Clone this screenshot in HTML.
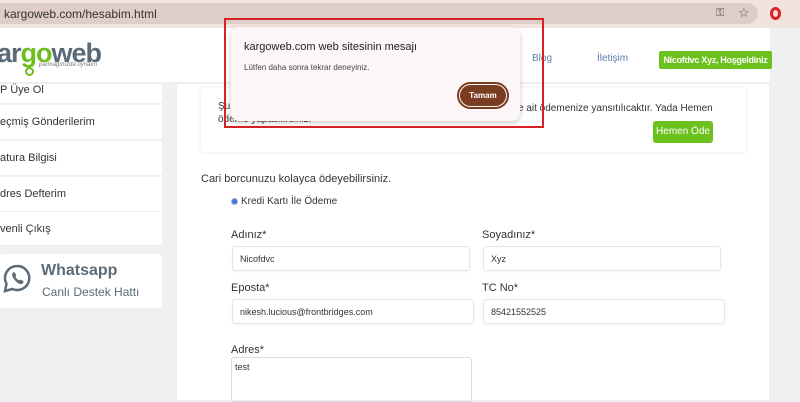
<!DOCTYPE html>
<html><head><meta charset="utf-8"><style>
*{margin:0;padding:0;box-sizing:border-box}
body{width:800px;height:400px;overflow:hidden;position:relative;font-family:"Liberation Sans",sans-serif;background:#f0f0f2;color:#333}
.abs{position:absolute;white-space:nowrap}
.top{left:0;top:0;width:800px;height:28px;background:#f1e3de}
.url{left:-10px;top:3px;width:768px;height:21px;border-radius:11px;background:#dfcdc8}
.hdr{left:0;top:28px;width:770px;height:55px;background:#fff;border-bottom:1px solid #eee}
.side{left:0;width:162px;background:#fff;font-size:11px;color:#333;padding-left:0;border-bottom:1px solid #eee;display:flex;align-items:center}
.main{left:177px;top:84px;width:592px;height:316px;background:#fff}
.lbl{font-size:11px;color:#333}
.inp{border:1px solid #e6e6e6;border-radius:3px;background:#fff;font-size:9px;color:#333;padding-left:7px;display:flex;align-items:center;box-shadow:0 1px 2px rgba(0,0,0,.05)}
</style></head><body>
<div class="abs top"></div>
<div class="abs url"></div>
<div class="abs" style="left:4px;top:7px;font-size:12px;color:#333">kargoweb.com/hesabim.html</div>
<div class="abs" style="left:716px;top:7px;font-size:11px;color:#555">⚿</div>
<div class="abs" style="left:738px;top:5px;font-size:13px;color:#555">☆</div>
<div class="abs" style="left:770px;top:7px;width:11px;height:13px;border:3px solid #d22;border-radius:50%"></div>
<div class="abs hdr"></div>
<div class="abs" style="left:-3px;top:38px;font-size:27px;font-weight:bold;color:#5a6a78;letter-spacing:-1px">ar<span style="color:#6cbf1e">go</span>web</div>
<div class="abs" style="left:25px;top:67px;width:9px;height:9px;border:2px solid #6cbf1e;border-radius:50%"></div>
<div class="abs" style="left:38px;top:62px;font-size:6px;color:#777;font-style:italic;background:#fff;padding:0 1px">parmağınızda oynatın</div>
<div class="abs" style="left:532px;top:53px;font-size:10px;color:#5a7fa6">Blog</div>
<div class="abs" style="left:597px;top:53px;font-size:10px;color:#5a7fa6">İletişim</div>
<div class="abs" style="left:659px;top:51px;width:113px;height:18px;background:#6cc11c;border-radius:2px;color:#fff;font-size:9px;font-weight:bold;letter-spacing:-0.3px;text-align:center;line-height:18px">Nicofdvc Xyz, Hoşgeldiniz</div>
<div class="abs side" style="top:84px;height:20px;align-items:flex-start">P Üye Ol</div>
<div class="abs side" style="top:105px;height:35px">eçmiş Gönderilerim</div>
<div class="abs side" style="top:141px;height:35px">atura Bilgisi</div>
<div class="abs side" style="top:177px;height:35px">dres Defterim</div>
<div class="abs side" style="top:212px;height:34px">venli Çıkış</div>
<div class="abs" style="left:0;top:254px;width:162px;height:54px;background:#fff;border-radius:3px"></div>
<svg class="abs" style="left:2px;top:263px" width="30" height="32" viewBox="0 0 30 32"><path d="M15 3a12 12 0 0 0-10.5 17.8L3 28l7.5-2A12 12 0 1 0 15 3z" fill="none" stroke="#5b6b78" stroke-width="2.5"/><path d="M10.5 10c1-1 2-1 2.5 0l1 2c.3.7 0 1.2-.6 1.7.8 1.7 2 2.9 3.7 3.7.5-.6 1-.9 1.7-.6l2 1c1 .5 1 1.5 0 2.5-1.5 1.5-4 1-7-2s-4.3-6-3.3-8.3z" fill="#5b6b78"/></svg>
<div class="abs" style="left:41px;top:262px;font-size:16px;font-weight:bold;color:#5b6b78">Whatsapp</div>
<div class="abs" style="left:42px;top:285px;font-size:12px;color:#5b6b78">Canlı Destek Hattı</div>
<div class="abs main"></div>
<div class="abs" style="left:201px;top:88px;width:545px;height:64px;background:#fff;box-shadow:0 0 4px rgba(0,0,0,.1);border-radius:3px"></div>
<div class="abs" style="left:218px;top:101px;font-size:10px;color:#333">Şu</div>
<div class="abs" style="left:218px;top:114px;font-size:10px;color:#333">ödeme yapabilirsiniz.</div>
<div class="abs" style="left:518px;top:103px;font-size:10px;color:#333">e ait ödemenize yansıtılıcaktır. Yada Hemen</div>
<div class="abs" style="left:653px;top:121px;width:60px;height:22px;background:#6cc11c;border-radius:3px;color:#fff;font-size:10px;text-align:center;line-height:22px">Hemen Öde</div>
<div class="abs lbl" style="left:201px;top:173px">Cari borcunuzu kolayca ödeyebilirsiniz.</div>
<div class="abs" style="left:231px;top:198px;width:7px;height:7px;border-radius:50%;background:#3b7de0;border:1px solid #aac"></div>
<div class="abs" style="left:241px;top:196px;font-size:10px;color:#333">Kredi Kartı İle Ödeme</div>
<div class="abs lbl" style="left:231px;top:229px">Adınız*</div>
<div class="abs lbl" style="left:482px;top:229px">Soyadınız*</div>
<div class="abs inp" style="left:232px;top:246px;width:238px;height:25px">Nicofdvc</div>
<div class="abs inp" style="left:483px;top:246px;width:238px;height:25px">Xyz</div>
<div class="abs lbl" style="left:231px;top:282px">Eposta*</div>
<div class="abs lbl" style="left:482px;top:282px">TC No*</div>
<div class="abs inp" style="left:232px;top:299px;width:242px;height:25px">nikesh.lucious@frontbridges.com</div>
<div class="abs inp" style="left:483px;top:299px;width:242px;height:25px">85421552525</div>
<div class="abs lbl" style="left:231px;top:344px">Adres*</div>
<div class="abs" style="left:231px;top:357px;width:241px;height:45px;border:1px solid #ddd;border-radius:3px;font-size:9px;padding:4px 3px">test</div>
<div class="abs" style="left:224px;top:18px;width:320px;height:110px;border:2px solid #d92027"></div>
<div class="abs" style="left:231px;top:27px;width:289px;height:94px;background:#fcf6f6;border-radius:8px;box-shadow:0 2px 6px rgba(0,0,0,.2)"></div>
<div class="abs" style="left:244px;top:41px;font-size:11px;color:#222">kargoweb.com web sitesinin mesajı</div>
<div class="abs" style="left:244px;top:63px;font-size:8px;color:#444">Lütfen daha sonra tekrar deneyiniz.</div>
<div class="abs" style="left:457px;top:82px;width:52px;height:27px;border:2px solid #7a3d22;border-radius:14px;padding:1px"><div style="width:100%;height:100%;background:#7a3d22;border-radius:12px;color:#fff;font-size:8px;font-weight:bold;text-align:center;line-height:21px">Tamam</div></div>
</body></html>
